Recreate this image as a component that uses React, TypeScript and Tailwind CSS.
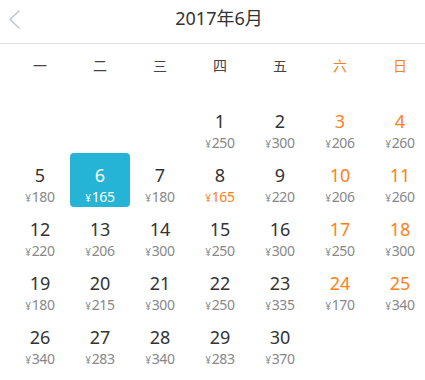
import React from "react";

const prices: Record<number, number> = {
  1: 250, 2: 300, 3: 206, 4: 260, 5: 180, 6: 165, 7: 180, 8: 165, 9: 220, 10: 206,
  11: 260, 12: 220, 13: 206, 14: 300, 15: 250, 16: 300, 17: 250, 18: 300, 19: 180,
  20: 215, 21: 300, 22: 250, 23: 335, 24: 170, 25: 340, 26: 340, 27: 283, 28: 340,
  29: 283, 30: 370,
};

const weekdays = ["一", "二", "三", "四", "五", "六", "日"];

export default function App() {
  const cells: (number | null)[] = [null, null, null];
  for (let d = 1; d <= 30; d++) cells.push(d);

  return (
    <div
      className="w-[425px] h-[380px] overflow-hidden bg-white text-[#333]"
      style={{ fontFamily: '"Noto Sans", "Noto Sans CJK SC", sans-serif' }}
    >
      <div className="relative h-[44px] border-b border-[#e0e0e0] flex items-center justify-center">
        <svg
          className="absolute left-0 top-0"
          width="30"
          height="40"
          viewBox="0 0 30 40"
          fill="none"
        >
          <polyline
            points="19,11 10,19.5 19,28"
            stroke="#c4c8cc"
            strokeWidth="1.6"
            strokeLinecap="round"
            strokeLinejoin="round"
          />
        </svg>
        <span className="text-[18px] leading-[24px] text-[#333] -mt-[8px] ml-[13px]">2017年6月</span>
      </div>
      <div className="w-[430px] pl-[10px]">
        <div className="grid grid-cols-[repeat(7,60px)] h-[42px] items-center">
          {weekdays.map((w, i) => (
            <div
              key={w}
              className={`text-center text-[14px] ${i >= 5 ? "text-[#ff7f1a]" : "text-[#444]"}`}
            >
              {w}
            </div>
          ))}
        </div>
        <div className="grid grid-cols-[repeat(7,60px)] auto-rows-[54px] mt-[13px]">
          {cells.map((d, i) => {
            if (d === null) return <div key={`e${i}`} />;
            const col = i % 7;
            const weekend = col >= 5;
            const selected = d === 6;
            const lowest = d === 8;
            return (
              <div
                key={d}
                className={`flex flex-col items-center pt-[11px] ${selected ? "bg-[#25b4d5] rounded-[4px]" : ""}`}
              >
                <div
                  className={`text-[18px] leading-[22px] ${
                    selected ? "text-white" : weekend ? "text-[#ff7f1a]" : "text-[#333]"
                  }`}
                >
                  {d}
                </div>
                <div
                  className={`text-[14px] leading-[18px] mt-[2px] tracking-[-0.3px] ${
                    selected ? "text-white" : lowest ? "text-[#ff7f1a]" : "text-[#888]"
                  }`}
                >
                  <span className="text-[10px] mr-[1px]">¥</span>
                  {prices[d]}
                </div>
              </div>
            );
          })}
        </div>
      </div>
    </div>
  );
}
